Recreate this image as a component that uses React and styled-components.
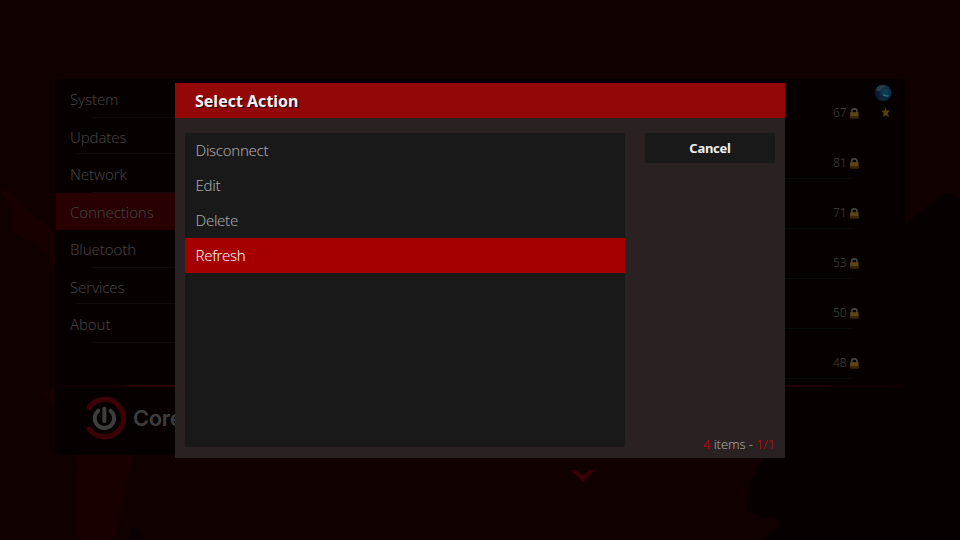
import React from "react";
import styled, { createGlobalStyle, css } from "styled-components";

const Global = createGlobalStyle`
  * { box-sizing: border-box; }
  body { margin: 0; background: #100000; overflow: hidden; }
`;

const Screen = styled.main`
  position: relative;
  width: 960px;
  height: 540px;
  padding: 79px 55px 0;
  background: #100000;
  font-family: "Noto Sans", "Open Sans", sans-serif;
  font-weight: 300;
  overflow: hidden;
`;

const Backdrop = styled.svg`
  position: absolute;
  inset: 0;
`;

const Window = styled.section`
  position: relative;
  display: grid;
  grid-template-rows: 306px 2px 1fr;
  width: 850px;
  height: 376px;
  background: #070001;
`;

const Panes = styled.div`
  display: grid;
  grid-template-columns: 361px 1fr;
`;

const Menu = styled.nav`
  padding: 1.9px 0 0 1px;
`;

const MenuItem = styled.div`
  display: flex;
  flex-direction: column;
  height: 37.5px;
  padding-left: 14px;
  font-size: 15px;
  line-height: 37px;
  letter-spacing: -0.12px;
  color: #444040;
  background: ${(p) => (p.$active ? "linear-gradient(#280001, #280001) 0 0 / 100% 36.8px no-repeat" : "transparent")};

  &::after {
    content: "";
    flex: none;
    height: 1px;
    margin-top: ${(p) => (p.$short ? "-0.5px" : "-2px")};
    margin-left: ${(p) => (p.$short ? "21px" : "6px")};
    background: ${(p) => (p.$active ? "transparent" : "#110a0b")};
  }
`;

const Label = styled.span`
  display: block;
  height: 36.5px;
  padding-top: 0.25px;
`;

const Divider = styled.div`
  background: linear-gradient(90deg, #150001 8%, #280001 9%, #280001 40%, #200001 91%, #120001 91.5%);
`;

const Networks = styled.div`
  display: flex;
  flex-direction: column;
  padding-top: 9px;
`;

const NetworkRow = styled.div`
  display: grid;
  grid-template-columns: 1fr 17px 9px 14px 20px;
  align-items: center;
  height: 50px;
  padding-right: 12px;
  font-size: 12px;
  letter-spacing: -0.2px;
  color: #444040;
`;

const Strength = styled.span`
  grid-column: 2;
  line-height: 16px;
`;

const RowRule = styled.div`
  flex: none;
  width: 436px;
  height: 1px;
  margin: -10px 0 9px;
  background: #060c0b;
`;

const StatusIcons = styled.div`
  grid-column: 5;
  display: flex;
  flex-direction: column;
  align-items: center;
  gap: 5px;
  margin-top: -24px;
`;

const StarIcon = styled.svg`
  margin-left: 5px;
`;

const Footer = styled.footer`
  display: flex;
  align-items: flex-start;
  padding: 8px 0 0 28px;
`;

const Wordmark = styled.span`
  margin: 5px 0 0 6px;
  font-family: Inter, "Open Sans", sans-serif;
  font-size: 22px;
  line-height: 36px;
  font-weight: 600;
  letter-spacing: -0.4px;
  color: #3d3d3d;
`;

const Dialog = styled.section`
  position: absolute;
  left: 175px;
  top: 83px;
  width: 610px;
  height: 375px;
  background: #2a2122;
`;

const DialogTitle = styled.h1`
  height: 35px;
  margin: 0;
  padding-left: 20px;
  background: #930807;
  color: #f2f0f0;
  font-size: 16px;
  line-height: 36px;
  font-weight: 700;
  text-shadow: 1px 1px 0 #1c0101;
`;

const DialogBody = styled.div`
  display: grid;
  grid-template-columns: 440px 130px;
  gap: 20px;
  height: 340px;
  padding: 15px 10px 0;
`;

const Actions = styled.ul`
  height: 314px;
  margin: 0;
  padding: 0;
  list-style: none;
  background: #191919;
  border-radius: 2px;
`;

const Action = styled.li`
  height: 35px;
  padding-left: 10.5px;
  font-size: 15px;
  line-height: 35px;
  letter-spacing: -0.28px;
  color: #aaaaaa;
  ${(p) => p.$selected && css`
    background: #a40000;
    color: #fff6f6;
  `}
`;

const Side = styled.aside`
  display: flex;
  flex-direction: column;
  justify-content: space-between;
  height: 320px;
`;

const Button = styled.button`
  height: 30px;
  padding: 0;
  border: 0;
  border-radius: 2px;
  background: #191919;
  color: #f0f0f0;
  font: 700 13px/30px "Noto Sans", "Open Sans", sans-serif;
  letter-spacing: -0.25px;
`;

const Count = styled.div`
  font-size: 13px;
  line-height: 18px;
  letter-spacing: -0.12px;
  text-align: right;
  color: #aaa6a6;
  white-space: nowrap;
`;

const Accent = styled.span`
  color: #d00505;
`;

const More = styled.svg`
  position: absolute;
  left: 571px;
  top: 469px;
`;

const Lock = () => (
  <svg width="9" height="11" viewBox="0 0 9 11">
    <path d="M1.8 5V2.6C1.8 .2 6.9.2 6.9 2.6V5" fill="none" stroke="#454343" strokeWidth="1.7" />
    <path d="M.2 4.2h8.3V10.3H.2z" fill="#5c4513" />
    <path d="M.2 8h8.3v2.4H.2z" fill="#3d2405" />
  </svg>
);

const Globe = () => (
  <svg width="18" height="18" viewBox="0 0 18 18">
    <defs>
      <radialGradient id="globe" cx=".65" cy=".45" r=".65">
        <stop offset="0" stopColor="#104655" />
        <stop offset=".55" stopColor="#0b2740" />
        <stop offset="1" stopColor="#061122" />
      </radialGradient>
    </defs>
    <circle cx="9" cy="9" r="8.5" fill="url(#globe)" />
    <path d="M2 5C4 1 9 .4 13 2.5L9 4 6 7 3 7z" fill="#2b3e4b" />
    <path d="M8.5 10l3.5 1 3.5.5-2 1.2-4-.7z" fill="#287078" />
    <path d="M4 14c3 3 8 2.5 10.5 0-3 1-7 1-10.5 0z" fill="#162c3b" />
  </svg>
);

const Star = () => (
  <StarIcon width="10" height="11" viewBox="0 0 10 11">
    <path d="M4.5 .2l1 3.2 3.6.1-2.4 2.4 1.2 4.4-2.9-2.1-3.2 1.6.9-3.8L.4 3.7l3.2-.3z" fill="#514112" />
  </StarIcon>
);

const PowerLogo = () => (
  <svg width="44" height="46" viewBox="83 395 44 46" fill="none" strokeLinecap="round">
    <path d="M89.2 407.4A18.8 18.8 0 1 1 89.2 428.8" stroke="#3d0006" strokeWidth="5" />
    <path d="M98.3 410.7A9.7 9.7 0 1 0 110.5 410.7" stroke="#3d3d3d" strokeWidth="4" />
    <path d="M104.4 408.8V421" stroke="#3d3d3d" strokeWidth="4" />
  </svg>
);

const menu = [
  { name: "System", short: true },
  { name: "Updates" },
  { name: "Network", short: true },
  { name: "Connections", active: true },
  { name: "Bluetooth", short: true },
  { name: "Services" },
  { name: "About", short: true },
];
const strengths = [67, 81, 71, 53, 50, 48];
const actions = ["Disconnect", "Edit", "Delete", "Refresh"];

export default function App() {
  return (
    <Screen>
      <Global />
      <Backdrop width="960" height="540" viewBox="0 0 960 540">
        <path d="M0 188L12 193 29 212 46 224 56 234V269L49 255 37 243 27 240 14 233V215Z" fill="#180001" />
        <path d="M41 395L55 388V403Z" fill="#180001" />
        <path d="M76 453H134L124 495 114 540H78V480Z" fill="#180001" />
        <path d="M129 540L129 529 133 527 138 530 142 540Z" fill="#090001" />
        <path d="M905 226L918 214 938 198 949 193 960 198V540H764L768 534 778 527 780 521 775 519 755 515 748 511 747 506 751 481 765 455H905Z" fill="#070001" />
      </Backdrop>
      <Window>
        <Panes>
          <Menu>
            {menu.map((m) => (
              <MenuItem key={m.name} $active={m.active} $short={m.short}>
                <Label>{m.name}</Label>
              </MenuItem>
            ))}
          </Menu>
          <Networks>
            {strengths.map((s, i) => (
              <React.Fragment key={s}>
                <NetworkRow>
                  <Strength>{s}</Strength>
                  <Lock />
                  {i === 0 && <StatusIcons><Globe /><Star /></StatusIcons>}
                </NetworkRow>
                {i > 0 && <RowRule />}
              </React.Fragment>
            ))}
          </Networks>
        </Panes>
        <Divider />
        <Footer>
          <PowerLogo />
          <Wordmark>CoreELEC</Wordmark>
        </Footer>
      </Window>
      <More width="24" height="14" viewBox="0 0 24 14">
        <path d="M0 1H6L12 7 18 1H24L12 13Z" fill="#380002" />
      </More>
      <Dialog>
        <DialogTitle>Select Action</DialogTitle>
        <DialogBody>
          <Actions>
            {actions.map((a) => (
              <Action key={a} $selected={a === "Refresh"}>{a}</Action>
            ))}
          </Actions>
          <Side>
            <Button>Cancel</Button>
            <Count><Accent>4</Accent> items - <Accent>1/1</Accent></Count>
          </Side>
        </DialogBody>
      </Dialog>
    </Screen>
  );
}
